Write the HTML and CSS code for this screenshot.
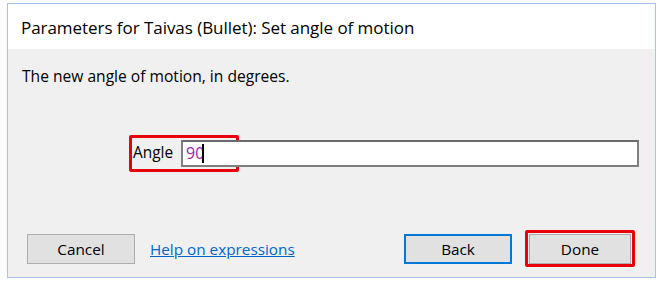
FILE: index.html
```html
<!DOCTYPE html>
<html>
<head>
<meta charset="utf-8">
<link rel="stylesheet" href="styles.css">
</head>
<body>
<div class="dialog">
  <div class="titlebar">Parameters for Taivas (Bullet): Set angle of motion</div>
  <div class="content">
    <div class="desc">The new angle of motion, in degrees.</div>
    <div class="field-row">
      <div class="highlight">
        <span class="label">Angle</span>
      </div>
      <div class="input"><span class="value">90</span><span class="caret"></span></div>
    </div>
    <div class="buttons">
      <button class="btn">Cancel</button>
      <a class="help" href="#">Help on expressions</a>
      <div class="spacer"></div>
      <button class="btn btn-default">Back</button>
      <div class="done-wrap"><button class="btn">Done</button></div>
    </div>
  </div>
</div>
</body>
</html>
```
FILE: styles.css
```css
html, body {
  margin: 0;
  padding: 0;
  background: #ffffff;
}
body {
  padding: 3px 4px 6px 7px;
  font-family: "Open Sans", "Noto Sans", sans-serif;
  color: #000;
}
.dialog {
  border: 1px solid #a9c3e8;
  display: flex;
  flex-direction: column;
  box-sizing: border-box;
  width: 649px;
  height: 275px;
}
.titlebar {
  height: 45px;
  background: #fff;
  font-size: 17px;
  line-height: 48px;
  padding-left: 13px;
  letter-spacing: -0.05px;
}
.content {
  flex: 1;
  background: #f0f0f0;
  display: flex;
  flex-direction: column;
}
.desc {
  font-size: 15.6px;
  padding: 16px 0 0 14px;
  line-height: 22px;
}
.field-row {
  display: flex;
  align-items: center;
  margin-top: 48px;
  margin-left: 121px;
  position: relative;
  height: 38px;
}
.highlight {
  position: absolute;
  left: 0;
  top: 0;
  width: 110px;
  height: 37px;
  border: 3px solid #e8000b;
  border-radius: 2px;
  box-sizing: border-box;
}
.label {
  position: absolute;
  left: 1px;
  top: 5px;
  font-size: 15.4px;
  line-height: 20px;
  background: #f0f0f0;
}
.input {
  margin-left: 52px;
  width: 458px;
  height: 27px;
  border: 2px solid #7f7f7f;
  border-top-color: #6a6a6a;
  box-sizing: border-box;
  background: #fff;
  display: flex;
  align-items: center;
  padding-left: 3px;
  position: relative;
  margin-top: -2px;
}
.value {
  color: #a020b0;
  font-size: 16px;
}
.caret {
  display: inline-block;
  width: 1.5px;
  height: 19px;
  background: #000;
  margin-left: -2px;
}
.buttons {
  display: flex;
  align-items: center;
  margin-top: 57px;
  padding-left: 19px;
  padding-right: 20px;
}
.btn {
  width: 108px;
  height: 30px;
  background: #e1e1e1;
  border: 1px solid #adadad;
  font-family: inherit;
  font-size: 15.3px;
  color: #000;
  padding: 0;
}
.btn-default {
  border: 2px solid #0078d7;
}
.help {
  margin-left: 15px;
  color: #0066cc;
  font-size: 15.3px;
  text-decoration: underline;
}
.spacer {
  flex: 1;
}
.done-wrap {
  margin-left: 13px;
  border: 3px solid #e8000b;
  border-radius: 2px;
  padding: 1px 1px 0 1px;
  display: flex;
}
.done-wrap .btn {
  width: 102px;
}
```
